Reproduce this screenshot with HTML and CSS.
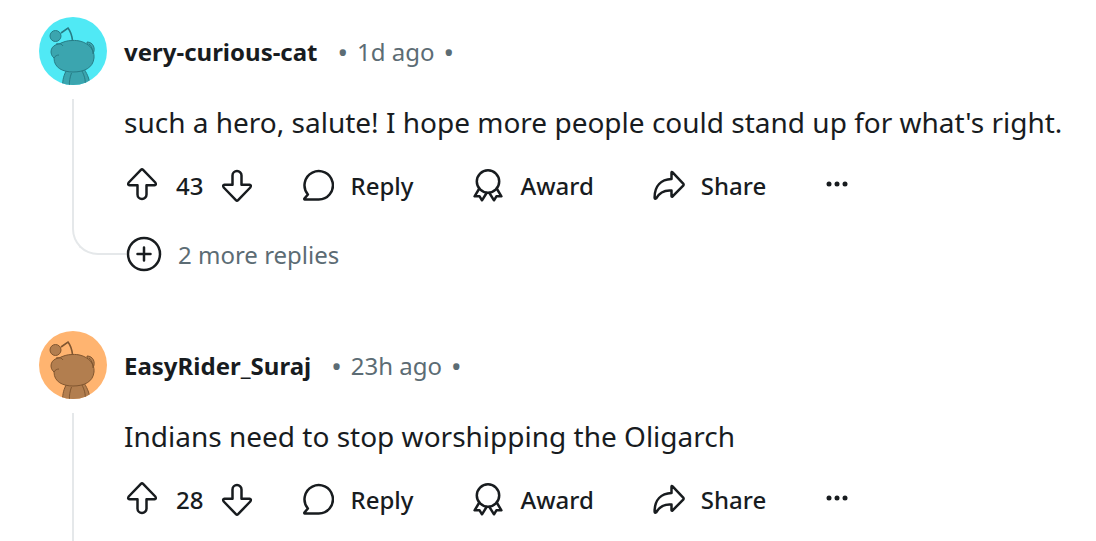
FILE: index.html
```
<!DOCTYPE html>
<html lang="en">
	<head>
		<meta charset="utf-8">
		<meta name="viewport" content="width=device-width, initial-scale=1">
		<title>Comments</title>
		<link rel="stylesheet" href="styles.css">
	</head>
	<body>
		<!-- shared icons -->
		<svg class="sprite" aria-hidden="true">
			<symbol id="icon-up" viewBox="0 0 32 34">
				<path d="M16 1.300Q16.500 1.300 17.100 1.900L29.300 14.500Q30.700 17 28.500 17.200H20.500V26.500a4.500 4.500 0 0 1-9 0V17.200H3.500Q1.300 17 2.700 14.500L14.900 1.900Q15.500 1.300 16 1.300z"/>
			</symbol>
			<symbol id="icon-down" viewBox="0 0 32 34">
				<path d="M16 32.700Q15.500 32.700 14.900 32.100L2.700 19.500Q1.300 17 3.500 16.800H11.500V7.500a4.500 4.500 0 0 1 9 0V16.800H28.500Q30.700 17 29.300 19.500L17.100 32.100Q16.500 32.700 16 32.700z"/>
			</symbol>
			<symbol id="icon-reply" viewBox="0 0 32 34">
				<path d="M16.500 31.500H2.800Q1.800 31.200 2.600 30.300L5.900 26.500A14.200 14.200 0 1 1 16.500 31.500z"/>
			</symbol>
			<symbol id="icon-award" viewBox="0 0 32 34">
				<circle cx="16" cy="13.500" r="11.200"/>
				<path d="M7.300 20.500L2.600 28.300L7.600 28.300L10 32.300L14.600 25M24.700 20.500L29.400 28.300L24.400 28.300L22 32.300L17.400 25"/>
			</symbol>
			<symbol id="icon-share" viewBox="0 0 32 34">
				<path d="M18.500 4.700Q18.500 3.300 19.600 4.300L30.200 15.600Q31 16.600 30.200 17.600L19.600 28.400Q18.500 29.200 18.500 28V22.500C11 21.800 6.500 24.500 3.200 30.300Q1.700 31.500 1.600 29.500C1.600 18 8 11.500 18.500 11z"/>
			</symbol>
			<symbol id="icon-more" viewBox="0 0 24 34">
				<circle class="dot" cx="4" cy="16" r="2.500"/>
				<circle class="dot" cx="12" cy="16" r="2.500"/>
				<circle class="dot" cx="20" cy="16" r="2.500"/>
			</symbol>
			<symbol id="icon-plus" viewBox="0 0 36 36">
				<circle cx="18" cy="18" r="16"/>
				<path d="M18 11.500V24.500M11.500 18H24.500"/>
			</symbol>
			<symbol id="snoo" viewBox="0 0 68 68">
				<path d="M23.500 70C23.500 62 25 58 28 52H45C49 58 51 64 51 70z"/>
				<path d="M30.500 69C30 65 31 60 32.500 56M46 69C47 63 45 58 43 54" fill="none"/>
				<path d="M48 25C54 25 57 31 54 37L49 35z"/>
				<path d="M33 23.500C46 22.500 56 31 55 41C54 51 45 55 34 55C24 55 15 51 15 41C10 37 11 28 20 27C24 25 28 23.500 33 23.500z"/>
				<path d="M15 41C16 39 18 38 20 38M17 27C20 26 23 27 24 29M50 27C53 30 54 33 54 37" fill="none"/>
				<path d="M33.500 23.500C33 19 32 15 29 11L22 16" fill="none" stroke-width="1.600"/>
				<circle cx="16.500" cy="19" r="5.500"/>
			</symbol>
		</svg>

		<article class="comment">
			<svg class="avatar avatar-cyan" role="img" aria-label="very-curious-cat avatar"><use href="#snoo"/></svg>
			<header class="meta">
				<a class="author" href="#">very-curious-cat</a>
				<span class="bullet">•</span>
				<time>1d ago</time>
				<span class="bullet">•</span>
			</header>
			<div class="thread thread-end"></div>
			<div class="content">
				<p class="text">such a hero, salute! I hope more people could stand up for what's right.</p>
				<div class="actions">
					<div class="votes">
						<button aria-label="Upvote"><svg class="icon"><use href="#icon-up"/></svg></button>
						<span class="score">43</span>
						<button aria-label="Downvote"><svg class="icon"><use href="#icon-down"/></svg></button>
					</div>
					<button><svg class="icon"><use href="#icon-reply"/></svg>Reply</button>
					<button><svg class="icon"><use href="#icon-award"/></svg>Award</button>
					<button><svg class="icon"><use href="#icon-share"/></svg>Share</button>
					<button aria-label="More options"><svg class="icon icon-more"><use href="#icon-more"/></svg></button>
				</div>
				<button class="more-replies"><svg class="icon icon-plus"><use href="#icon-plus"/></svg>2 more replies</button>
			</div>
		</article>

		<article class="comment">
			<svg class="avatar avatar-orange" role="img" aria-label="EasyRider_Suraj avatar"><use href="#snoo"/></svg>
			<header class="meta">
				<a class="author" href="#">EasyRider_Suraj</a>
				<span class="bullet">•</span>
				<time>23h ago</time>
				<span class="bullet">•</span>
			</header>
			<div class="thread"></div>
			<div class="content">
				<p class="text">Indians need to stop worshipping the Oligarch</p>
				<div class="actions">
					<div class="votes">
						<button aria-label="Upvote"><svg class="icon"><use href="#icon-up"/></svg></button>
						<span class="score">28</span>
						<button aria-label="Downvote"><svg class="icon"><use href="#icon-down"/></svg></button>
					</div>
					<button><svg class="icon"><use href="#icon-reply"/></svg>Reply</button>
					<button><svg class="icon"><use href="#icon-award"/></svg>Award</button>
					<button><svg class="icon"><use href="#icon-share"/></svg>Share</button>
					<button aria-label="More options"><svg class="icon icon-more"><use href="#icon-more"/></svg></button>
				</div>
			</div>
		</article>
	</body>
</html>
```
FILE: styles.css
```
* {
	box-sizing: border-box;
}

body {
	margin: 0;
	padding: 17px 16px 0 39px;
	background: #fff;
	color: #181c1f;
	font-family: "Segoe UI", "Noto Sans", sans-serif;
	font-size: 24px;
}

.sprite {
	display: none;
}

button {
	display: flex;
	align-items: center;
	gap: 16px;
	padding: 0;
	border: 0;
	background: none;
	color: inherit;
	font: inherit;
	cursor: pointer;
}

.comment {
	display: grid;
	grid-template-columns: 68px 1fr;
	column-gap: 17px;
}

.avatar {
	width: 68px;
	height: 68px;
	border-radius: 50%;
}

.avatar-cyan {
	background: #50e9f5;
	fill: #3ba5af;
	stroke: #277c86;
}

.avatar-orange {
	background: #ffb470;
	fill: #b27e4f;
	stroke: #805630;
}

.meta {
	display: flex;
	align-items: center;
	gap: 9px;
	color: #5c6c74;
}

.author {
	margin-right: 11px;
	color: #181c1f;
	font-weight: 700;
	text-decoration: none;
}

.bullet {
	padding-top: 2px;
	font-size: 28px;
	line-height: 24px;
}

/* line that runs down from the avatar */
.thread {
	margin: 14px 0 0 33px;
	border-left: 2px solid #e5e8ea;
}

/* last one bends into the plus button */
.thread-end {
	margin-right: -19px;
	margin-bottom: 76px;
	border-bottom: 2px solid #e5e8ea;
	border-bottom-left-radius: 26px;
}

.content {
	padding-bottom: 59px;
}

.comment:last-child .content {
	padding-bottom: 23px;
}

.text {
	margin: 17px 0 23px;
	font-size: 28px;
	line-height: 40px;
}

.actions {
	display: flex;
	align-items: center;
	gap: 59px;
	height: 40px;
	font-weight: 500;
}

.votes {
	display: flex;
	align-items: center;
	gap: 18px;
	margin: 0 -10px 0 2px;
}

.icon {
	width: 32px;
	height: 34px;
	fill: none;
	stroke: #181c1f;
	stroke-width: 2.5px;
	stroke-linejoin: round;
	stroke-linecap: round;
}

.icon-more {
	width: 24px;
}

.dot {
	fill: #181c1f;
	stroke: none;
}

.more-replies {
	margin: 31px 0 0 2px;
	color: #5c6c74;
}

.icon-plus {
	width: 36px;
	height: 36px;
}
```
